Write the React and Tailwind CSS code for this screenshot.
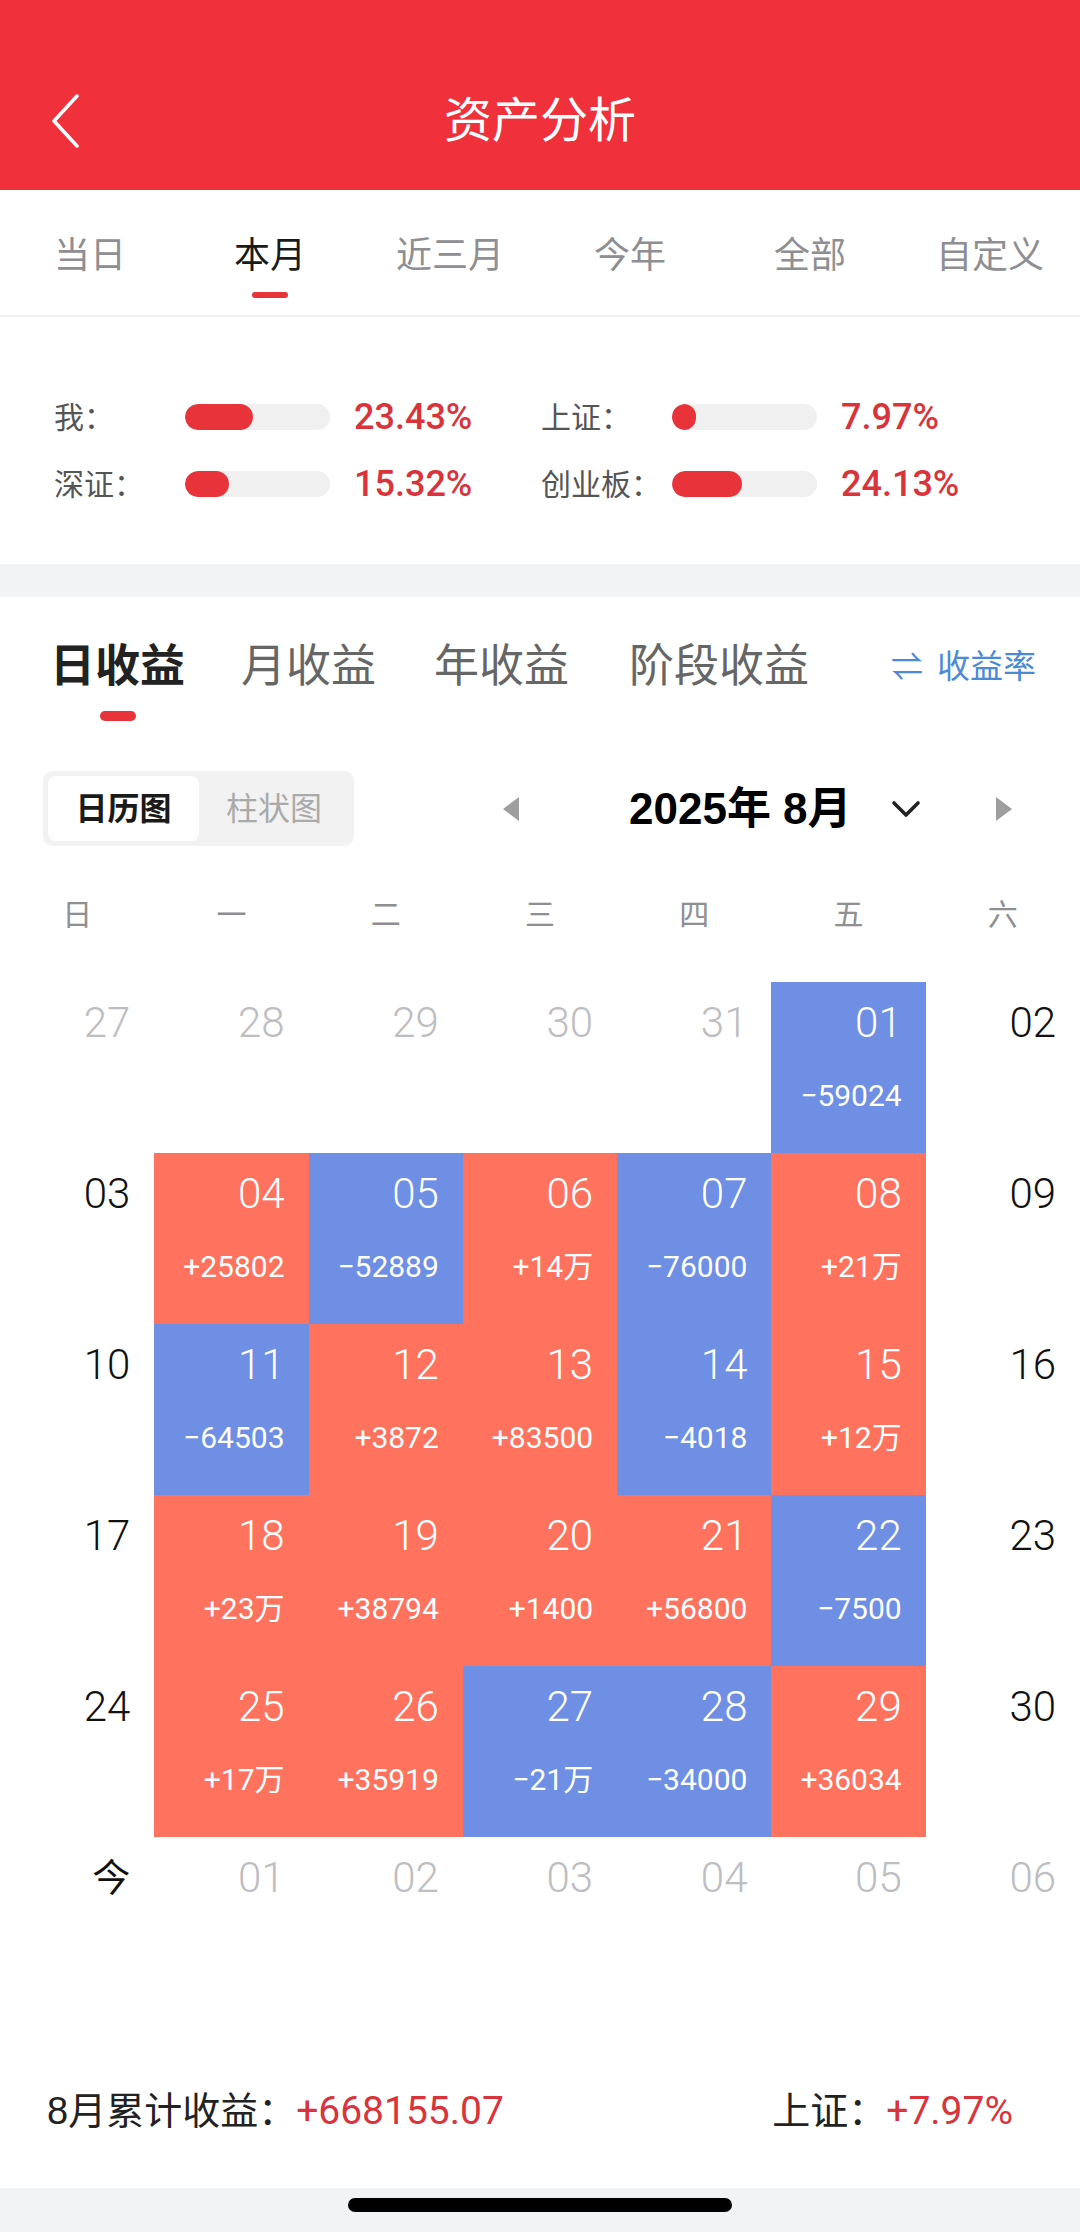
import { ChevronDown } from "lucide-react";

const FONT = { fontFamily: '"Liberation Sans", "Noto Sans CJK SC", sans-serif' };
const NUM = { fontFamily: 'Roboto, "Noto Sans CJK SC", sans-serif' };

const periodTabs = ["当日", "本月", "近三月", "今年", "全部", "自定义"];

const compare = [
  { label: "我：", value: 23.43 },
  { label: "上证：", value: 7.97 },
  { label: "深证：", value: 15.32 },
  { label: "创业板：", value: 24.13 },
];

// type: o = other month, w = weekend plain, r = gain, b = loss, t = today
const weeks = [
  [["27", "o"], ["28", "o"], ["29", "o"], ["30", "o"], ["31", "o"], ["01", "b", "−59024"], ["02", "w"]],
  [["03", "w"], ["04", "r", "+25802"], ["05", "b", "−52889"], ["06", "r", "+14万"], ["07", "b", "−76000"], ["08", "r", "+21万"], ["09", "w"]],
  [["10", "w"], ["11", "b", "−64503"], ["12", "r", "+3872"], ["13", "r", "+83500"], ["14", "b", "−4018"], ["15", "r", "+12万"], ["16", "w"]],
  [["17", "w"], ["18", "r", "+23万"], ["19", "r", "+38794"], ["20", "r", "+1400"], ["21", "r", "+56800"], ["22", "b", "−7500"], ["23", "w"]],
  [["24", "w"], ["25", "r", "+17万"], ["26", "r", "+35919"], ["27", "b", "−21万"], ["28", "b", "−34000"], ["29", "r", "+36034"], ["30", "w"]],
];

const nextWeek = [["今", "t"], ["01", "o"], ["02", "o"], ["03", "o"], ["04", "o"], ["05", "o"], ["06", "o"]];

function DayCell({ day, type, amount }) {
  const bg = type === "r" ? "bg-[#FF735E]" : type === "b" ? "bg-[#6E8FE3]" : "";
  const color =
    type === "r" || type === "b" ? "text-white" : type === "o" ? "text-[#BDBDC2]" : "text-[#111111]";
  return (
    <div className={`h-[171px] flex flex-col items-end pr-[24px] pt-[20px] ${bg}`}>
      <span className={`text-[42px] leading-[42px] font-light ${color}`} style={NUM}>
        {day}
      </span>
      {amount && (
        <span className="mt-[37px] text-[30px] leading-[30px] text-white" style={NUM}>
          {amount}
        </span>
      )}
    </div>
  );
}

export default function App() {
  return (
    <div className="w-[1080px] h-[2232px] bg-white flex flex-col overflow-hidden" style={FONT}>
      {/* Header */}
      <div className="h-[190px] bg-[#F0303A] grid grid-cols-[1fr_auto_1fr] items-center pt-[52px]">
        <div className="pl-[50px]">
          <svg width="30" height="54" viewBox="0 0 30 54" fill="none">
            <path d="M27 2 L4 27 L27 52" stroke="white" strokeWidth="3.5" strokeLinecap="round" strokeLinejoin="round" />
          </svg>
        </div>
        <div className="text-white text-[48px] leading-[60px]">资产分析</div>
        <div />
      </div>

      {/* Period tabs */}
      <div className="h-[127px] grid grid-cols-6 border-b-2 border-[#EFEFEF]">
        {periodTabs.map((t, i) => (
          <div key={t} className="flex flex-col items-center pt-[48px]">
            <span className={`text-[36px] leading-[36px] ${i === 1 ? "text-[#1A1A1A]" : "text-[#8E8E93]"}`}>
              {t}
            </span>
            {i === 1 && <span className="mt-[18px] w-[36px] h-[6px] rounded-full bg-[#E8333A]" />}
          </div>
        ))}
      </div>

      {/* Comparison bars */}
      <div className="px-[54px] pt-[80px] pb-[60px] grid grid-cols-[487px_1fr] gap-y-[27px]">
        {compare.map((c) => (
          <div key={c.label} className="h-[40px] flex items-center">
            <span className="w-[131px] text-[30px] text-[#555555]">{c.label}</span>
            <div className="w-[145px] h-[26px] rounded-full bg-[#F0F0F0] overflow-hidden">
              <div
                className="h-full rounded-full bg-[#E8333A] min-w-[24px]"
                style={{ width: `${c.value * 2}%` }}
              />
            </div>
            <span className="ml-[24px] text-[36px] font-medium text-[#D9343C]" style={NUM}>
              {c.value.toFixed(2)}%
            </span>
          </div>
        ))}
      </div>

      <div className="h-[33px] bg-[#F2F3F5]" />

      {/* Earnings tabs */}
      <div className="flex items-start pl-[50px] pr-[44px] pt-[47px]">
        <div className="flex flex-col items-center">
          <span className="text-[45px] leading-[46px] font-bold text-[#222222]">日收益</span>
          <span className="mt-[21px] w-[36px] h-[10px] rounded-full bg-[#E8333A]" />
        </div>
        <span className="ml-[56px] text-[45px] leading-[46px] text-[#666666]">月收益</span>
        <span className="ml-[58px] text-[45px] leading-[46px] text-[#666666]">年收益</span>
        <span className="ml-[60px] text-[45px] leading-[46px] text-[#666666]">阶段收益</span>
        <span className="ml-auto flex items-center h-[46px] text-[33px] text-[#4A8AD8]">
          <span className="mr-[14px] text-[32px]">⇌</span>收益率
        </span>
      </div>

      {/* Toggle + month nav */}
      <div className="flex items-center pl-[43px] mt-[50px]">
        <div className="w-[311px] h-[75px] rounded-[10px] bg-[#F2F2F2] p-[5px] flex">
          <div className="w-[151px] h-full rounded-[8px] bg-white flex items-center justify-center text-[32px] font-bold text-[#1A1A1A]">
            日历图
          </div>
          <div className="flex-1 flex items-center justify-center text-[32px] text-[#AAAAAA]">柱状图</div>
        </div>
        <svg className="ml-[147px]" width="20" height="26" viewBox="0 0 20 26">
          <path d="M18 1 L2 13 L18 25 Z" fill="#9E9E9E" />
        </svg>
        <span className="ml-[108px] text-[44px] leading-[50px] font-bold text-black">2025年 8月</span>
        <ChevronDown className="ml-[30px] w-[48px] h-[48px] text-[#222222]" strokeWidth={1.8} />
        <svg className="ml-[64px]" width="20" height="26" viewBox="0 0 20 26">
          <path d="M2 1 L18 13 L2 25 Z" fill="#9E9E9E" />
        </svg>
      </div>

      {/* Weekdays */}
      <div className="grid grid-cols-7 mt-[54px]">
        {["日", "一", "二", "三", "四", "五", "六"].map((d) => (
          <span key={d} className="text-center text-[30px] leading-[30px] text-[#8E8E93]">
            {d}
          </span>
        ))}
      </div>

      {/* Calendar */}
      <div className="mt-[52px] grid grid-cols-7">
        {weeks.flat().map(([day, type, amount], i) => (
          <DayCell key={i} day={day} type={type} amount={amount} />
        ))}
        {nextWeek.map(([day, type], i) => (
          <div key={`n${i}`} className="h-[84px] flex justify-end pr-[24px] pt-[20px]">
            <span
              className={`leading-[42px] ${type === "t" ? "text-[#111111] text-[38px]" : "text-[#BDBDC2] text-[42px] font-light"}`}
              style={type === "t" ? FONT : NUM}
            >
              {day}
            </span>
          </div>
        ))}
      </div>

      {/* Footer summary */}
      <div className="mt-[170px] h-[40px] flex items-center justify-between pl-[47px] pr-[67px]">
        <div className="flex items-center">
          <span className="text-[38px] text-[#222222]">8月累计收益：</span>
          <span className="text-[39px] text-[#D9343C]" style={NUM}>+668155.07</span>
        </div>
        <div className="flex items-center">
          <span className="text-[38px] text-[#222222]">上证：</span>
          <span className="text-[39px] text-[#D9343C]" style={NUM}>+7.97%</span>
        </div>
      </div>

      <div className="mt-auto h-[44px] bg-[#F2F3F5] flex justify-center pt-[10px]">
        <div className="w-[384px] h-[14px] rounded-full bg-black" />
      </div>
    </div>
  );
}
